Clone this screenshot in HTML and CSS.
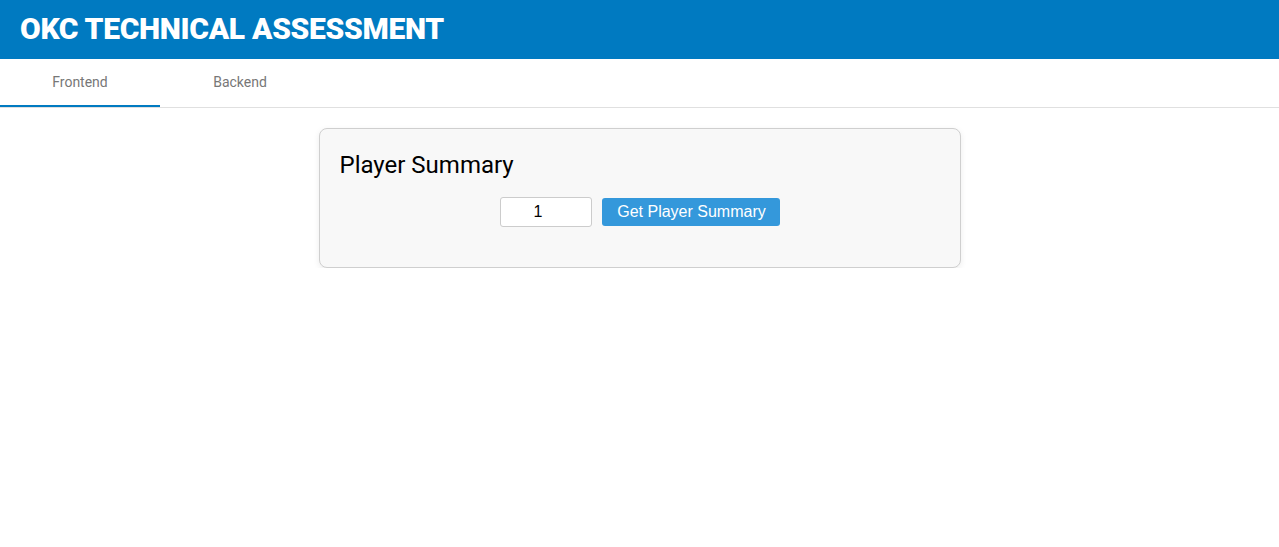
FILE: index.html
```html
<!DOCTYPE html>
<html>
<head>
<meta charset="utf-8">
<link rel="stylesheet" href="styles.css">
</head>
<body>
<header class="app-header">
  <h1 class="app-title">OKC TECHNICAL ASSESSMENT</h1>
</header>
<nav class="tabs">
  <div class="tab tab-active">Frontend</div>
  <div class="tab">Backend</div>
</nav>
<main class="content">
  <section class="card">
    <h2 class="card-title">Player Summary</h2>
    <div class="controls">
      <input class="player-input" type="number" value="1">
      <button class="fetch-btn">Get Player Summary</button>
    </div>
  </section>
</main>
</body>
</html>
```
FILE: styles.css
```css
* { box-sizing: border-box; }
body {
  margin: 0;
  font-family: Roboto, "Liberation Sans", sans-serif;
  background: #fff;
}
.app-header {
  background: #007ac1;
  height: 59px;
  display: flex;
  align-items: center;
  padding: 0 20px;
}
.app-title {
  margin: 0;
  color: #fff;
  font-family: Roboto, sans-serif;
  font-weight: 900;
  font-size: 30px;
  letter-spacing: -0.3px;
  line-height: 1;
  padding-bottom: 2px;
}
.tabs {
  display: flex;
  height: 49px;
  border-bottom: 1px solid #e0e0e0;
}
.tab {
  width: 160px;
  height: 48px;
  display: flex;
  align-items: center;
  justify-content: center;
  font-size: 14px;
  color: #777;
  padding-bottom: 2px;
}
.tab-active {
  border-bottom: 2px solid #007ac1;
  padding-bottom: 0;
}
.content {
  display: flex;
  justify-content: center;
  padding-top: 20px;
}
.card {
  width: 642px;
  height: 140px;
  background: #f8f8f8;
  border: 1px solid #cfcfcf;
  border-radius: 8px;
  box-shadow: 0 2px 6px rgba(0,0,0,0.08);
  padding: 20px 20px;
}
.card-title {
  margin: 0;
  font-weight: 400;
  font-size: 24px;
  color: #000;
  line-height: 32px;
}
.controls {
  display: flex;
  justify-content: center;
  align-items: center;
  gap: 10px;
  margin-top: 16px;
}
.player-input {
  width: 92px;
  height: 30px;
  border: 1px solid #ccc;
  border-radius: 3px;
  background: #fff;
  text-align: center;
  font-family: "Liberation Sans", Arial, sans-serif;
  font-size: 16px;
  color: #000;
  padding: 0 2px;
}
.fetch-btn {
  width: 178px;
  height: 28px;
  background: #3498db;
  border: none;
  border-radius: 3px;
  color: #fff;
  font-family: "Liberation Sans", Arial, sans-serif;
  font-size: 16px;
  padding: 0 0 0 2px;
}
```
